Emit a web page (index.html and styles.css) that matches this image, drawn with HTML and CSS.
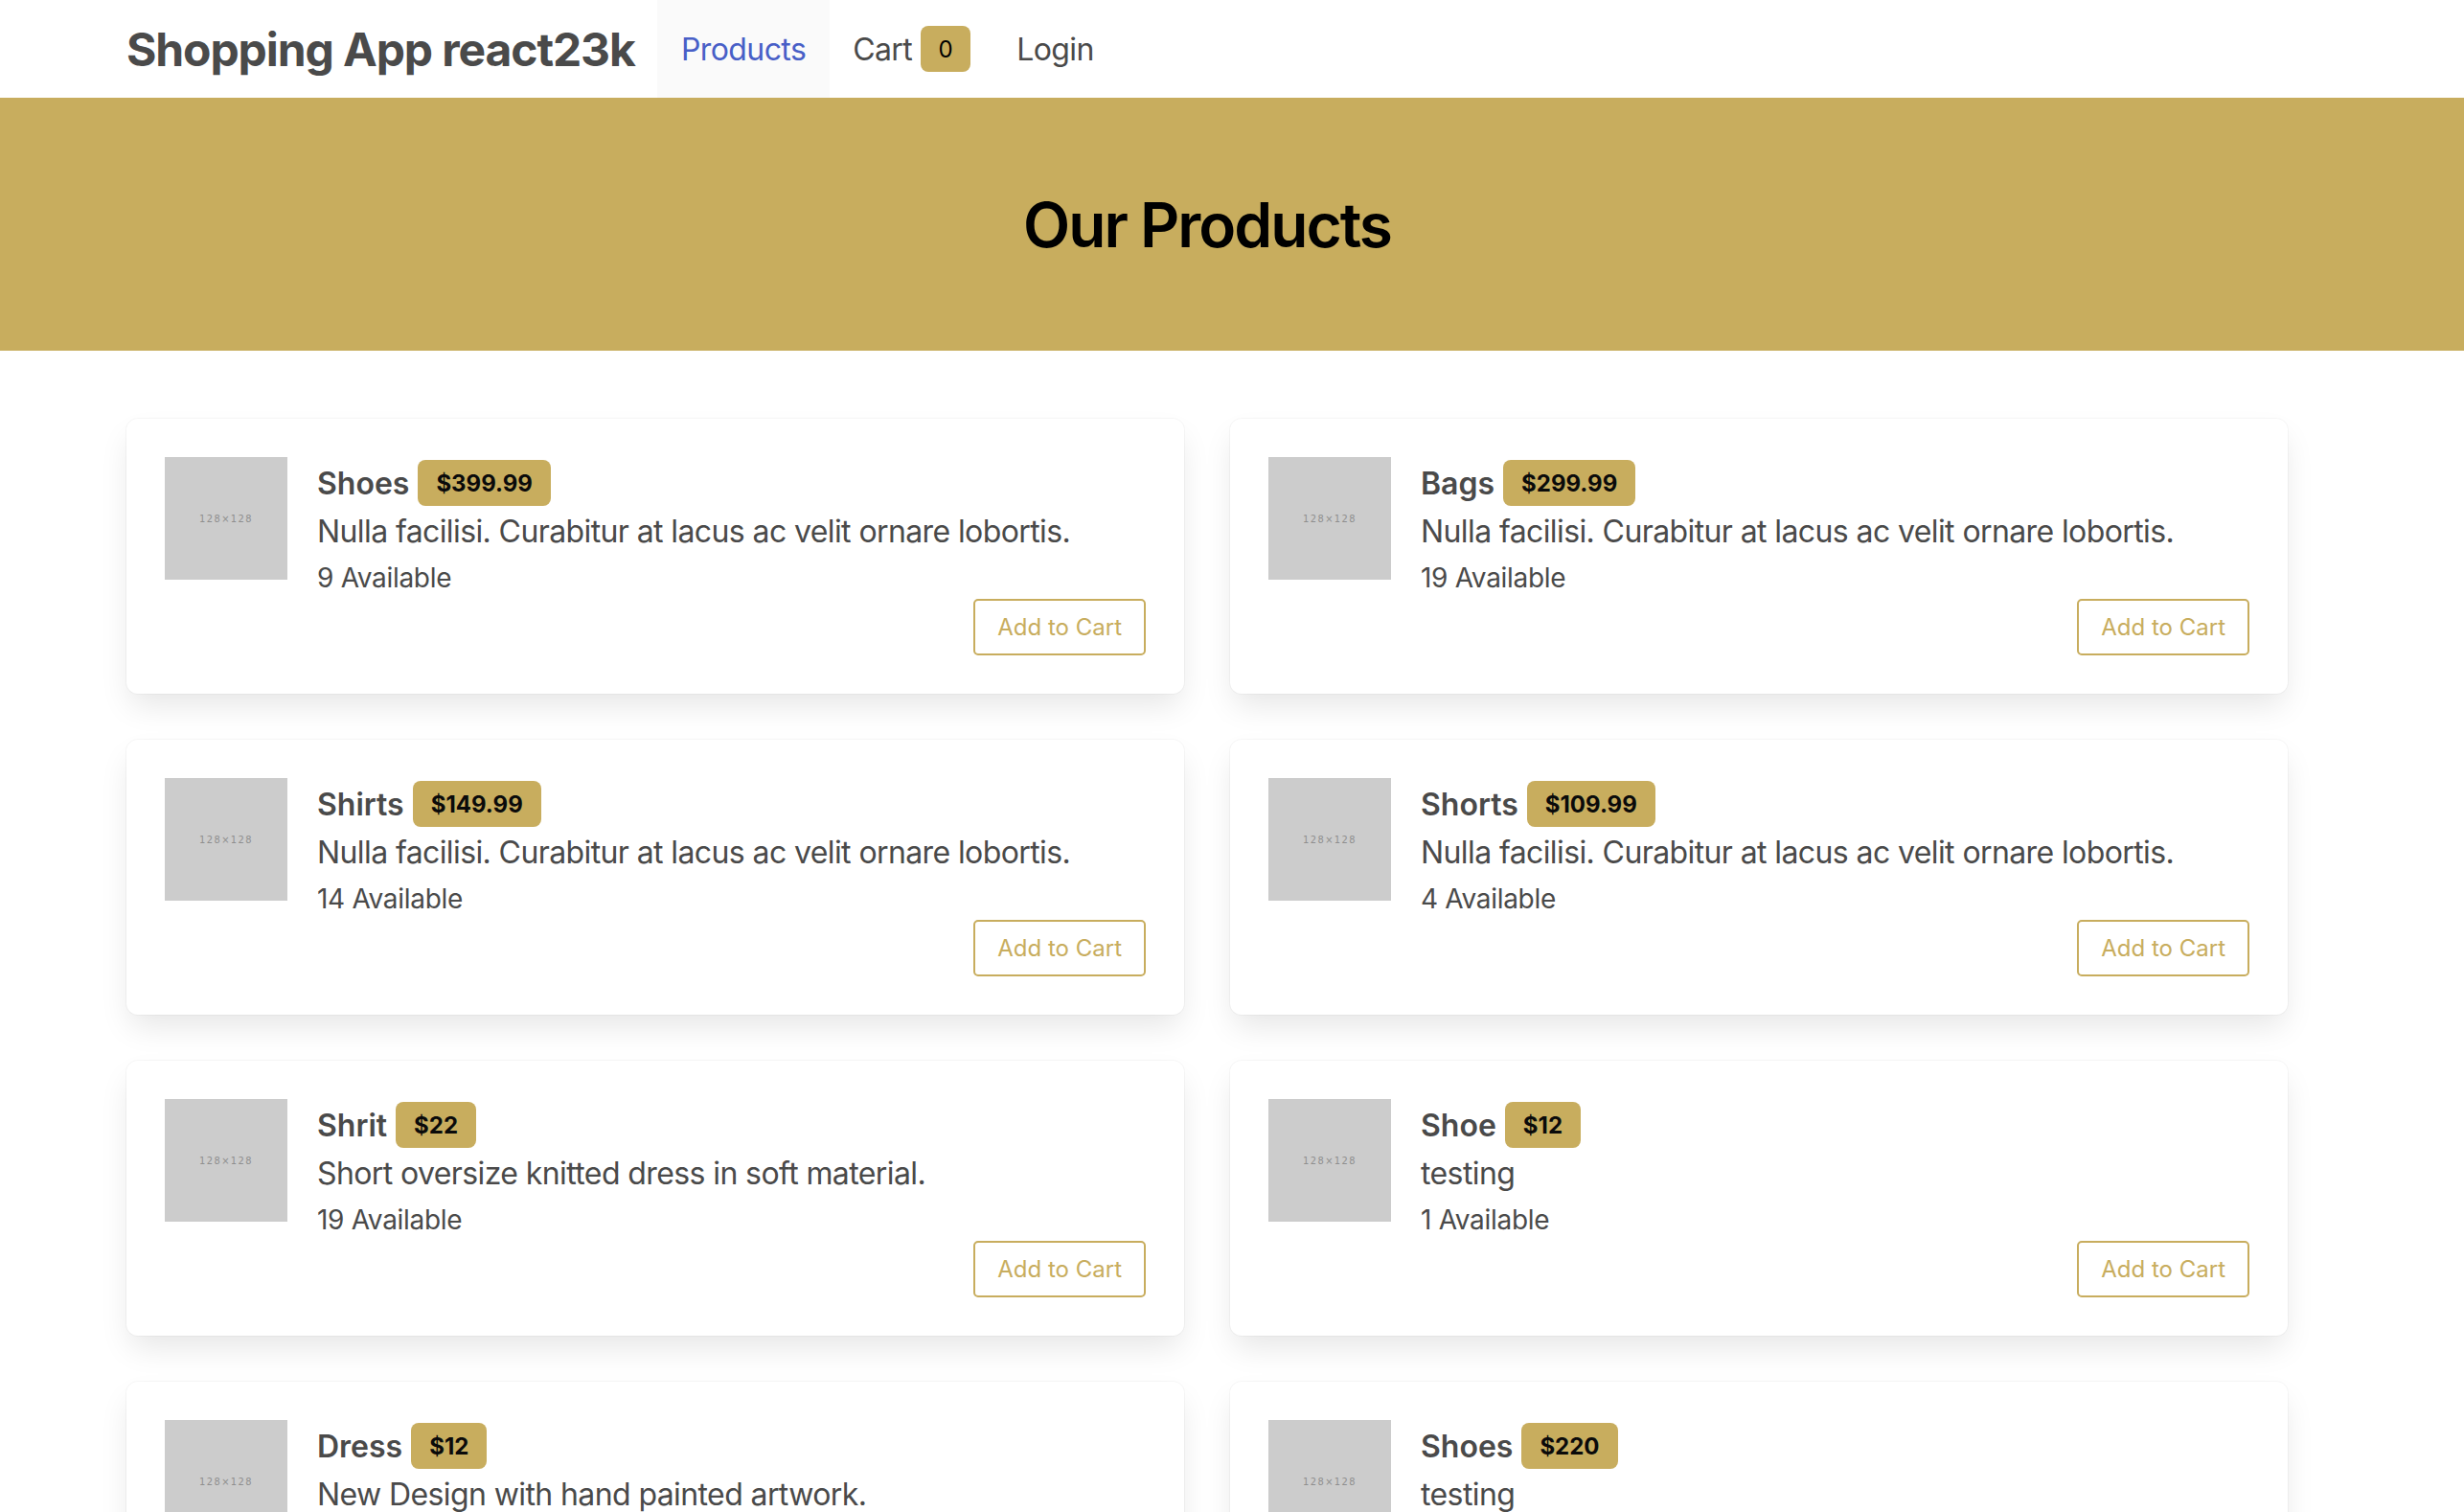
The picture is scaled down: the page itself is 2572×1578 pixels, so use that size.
FILE: index.html
```html
<!DOCTYPE html>
<html lang="en">
<head>
<meta charset="utf-8">
<title>Shopping App react23k</title>
<link rel="stylesheet" href="styles.css">
</head>
<body>
<nav class="navbar">
  <a class="brand">Shopping App react23k</a>
  <a class="nav-item active">Products</a>
  <a class="nav-item">Cart <span class="badge">0</span></a>
  <a class="nav-item">Login</a>
</nav>
<section class="hero">
  <div class="hero-inner">
    <h1 class="hero-title">Our Products</h1>
  </div>
</section>
<main class="products">
  <div class="card">
    <div class="media">
      <div class="thumb">128×128</div>
      <div class="media-content">
        <div class="title-row"><span class="name">Shoes</span><span class="tag">$399.99</span></div>
        <p class="desc">Nulla facilisi. Curabitur at lacus ac velit ornare lobortis.</p>
        <p class="stock">9 Available</p>
        <div class="actions"><button class="btn">Add to Cart</button></div>
      </div>
    </div>
  </div>
  <div class="card">
    <div class="media">
      <div class="thumb">128×128</div>
      <div class="media-content">
        <div class="title-row"><span class="name">Bags</span><span class="tag">$299.99</span></div>
        <p class="desc">Nulla facilisi. Curabitur at lacus ac velit ornare lobortis.</p>
        <p class="stock">19 Available</p>
        <div class="actions"><button class="btn">Add to Cart</button></div>
      </div>
    </div>
  </div>
  <div class="card">
    <div class="media">
      <div class="thumb">128×128</div>
      <div class="media-content">
        <div class="title-row"><span class="name">Shirts</span><span class="tag">$149.99</span></div>
        <p class="desc">Nulla facilisi. Curabitur at lacus ac velit ornare lobortis.</p>
        <p class="stock">14 Available</p>
        <div class="actions"><button class="btn">Add to Cart</button></div>
      </div>
    </div>
  </div>
  <div class="card">
    <div class="media">
      <div class="thumb">128×128</div>
      <div class="media-content">
        <div class="title-row"><span class="name">Shorts</span><span class="tag">$109.99</span></div>
        <p class="desc">Nulla facilisi. Curabitur at lacus ac velit ornare lobortis.</p>
        <p class="stock">4 Available</p>
        <div class="actions"><button class="btn">Add to Cart</button></div>
      </div>
    </div>
  </div>
  <div class="card">
    <div class="media">
      <div class="thumb">128×128</div>
      <div class="media-content">
        <div class="title-row"><span class="name">Shrit</span><span class="tag">$22</span></div>
        <p class="desc">Short oversize knitted dress in soft material.</p>
        <p class="stock">19 Available</p>
        <div class="actions"><button class="btn">Add to Cart</button></div>
      </div>
    </div>
  </div>
  <div class="card">
    <div class="media">
      <div class="thumb">128×128</div>
      <div class="media-content">
        <div class="title-row"><span class="name">Shoe</span><span class="tag">$12</span></div>
        <p class="desc">testing</p>
        <p class="stock">1 Available</p>
        <div class="actions"><button class="btn">Add to Cart</button></div>
      </div>
    </div>
  </div>
  <div class="card">
    <div class="media">
      <div class="thumb">128×128</div>
      <div class="media-content">
        <div class="title-row"><span class="name">Dress</span><span class="tag">$12</span></div>
        <p class="desc">New Design with hand painted artwork.</p>
        <p class="stock">5 Available</p>
        <div class="actions"><button class="btn">Add to Cart</button></div>
      </div>
    </div>
  </div>
  <div class="card">
    <div class="media">
      <div class="thumb">128×128</div>
      <div class="media-content">
        <div class="title-row"><span class="name">Shoes</span><span class="tag">$220</span></div>
        <p class="desc">testing</p>
        <p class="stock">3 Available</p>
        <div class="actions"><button class="btn">Add to Cart</button></div>
      </div>
    </div>
  </div>
</main>
</body>
</html>
```

FILE: styles.css
```css
* { box-sizing: border-box; }

html, body {
  margin: 0;
  padding: 0;
  background: #ffffff;
}

body {
  font-family: Inter, "Noto Sans", "Liberation Sans", sans-serif;
  color: #4a4a4a;
}

a { text-decoration: none; color: inherit; cursor: pointer; }

.navbar {
  display: flex;
  align-items: stretch;
  height: 102px;
  padding-left: 132px;
  background: #ffffff;
}

.brand {
  display: flex;
  align-items: center;
  width: 554px;
  font-size: 48px;
  font-weight: 700;
  color: #4a4a4a;
  letter-spacing: -1.1px;
}

.nav-item {
  display: flex;
  align-items: center;
  padding: 0 24px;
  font-size: 32px;
  letter-spacing: -0.6px;
  color: #4a4a4a;
}

.nav-item.active {
  background: #fafafa;
  color: #485fc7;
  padding: 0 25px;
}

.badge {
  display: inline-flex;
  align-items: center;
  justify-content: center;
  height: 48px;
  width: 52px;
  margin-left: 9px;
  border-radius: 8px;
  background: #c8ad5e;
  color: #000;
  font-size: 24px;
  letter-spacing: 0;
}

.hero {
  background: #c8ad5e;
  padding: 97px 0 95px;
}

.hero-inner {
  width: 2256px;
  margin-left: 132px;
  text-align: center;
}

.hero-title {
  margin: 0;
  font-size: 64px;
  line-height: 72px;
  font-weight: 600;
  letter-spacing: -2px;
  color: #000;
}

.products {
  display: grid;
  grid-template-columns: 1104px 1104px;
  gap: 48px;
  margin-left: 132px;
  padding-top: 71px;
  padding-bottom: 60px;
}

.card {
  background: #ffffff;
  border-radius: 12px;
  padding: 40px;
  box-shadow: 0 16px 32px -4px rgba(10, 10, 10, 0.1), 0 0 0 1px rgba(10, 10, 10, 0.03);
}

.media {
  display: flex;
  align-items: flex-start;
  gap: 31px;
}

.thumb {
  flex: 0 0 128px;
  width: 128px;
  height: 128px;
  background: #cccccc;
  color: #8f8f8f;
  display: flex;
  align-items: center;
  justify-content: center;
  font-family: "DejaVu Sans Condensed", "Liberation Sans Narrow", sans-serif;
  font-size: 11px;
  letter-spacing: 1.4px;
}

.media-content {
  flex: 1;
  min-width: 0;
}

.title-row {
  display: flex;
  align-items: center;
  gap: 9px;
  height: 54px;
}

.name {
  font-size: 32px;
  font-weight: 600;
  color: #4a4a4a;
}

.tag {
  display: inline-flex;
  align-items: center;
  height: 48px;
  padding: 0 19px;
  border-radius: 8px;
  background: #c8ad5e;
  color: #0a0a0a;
  font-size: 24px;
  font-weight: 700;
}

.desc {
  margin: 0;
  font-size: 32px;
  line-height: 48px;
  letter-spacing: -0.6px;
  color: #4a4a4a;
}

.stock {
  margin: 3px 0 0;
  font-size: 28px;
  line-height: 42px;
  letter-spacing: -0.3px;
  color: #4a4a4a;
}

.actions {
  display: flex;
  justify-content: flex-end;
  margin-top: 1px;
}

.btn {
  height: 59px;
  padding: 0 23px;
  background: #ffffff;
  border: 2px solid #c8ad5e;
  border-radius: 5px;
  color: #c8ad5e;
  font-family: Inter, "Noto Sans", sans-serif;
  font-size: 24px;
  cursor: pointer;
}
```
